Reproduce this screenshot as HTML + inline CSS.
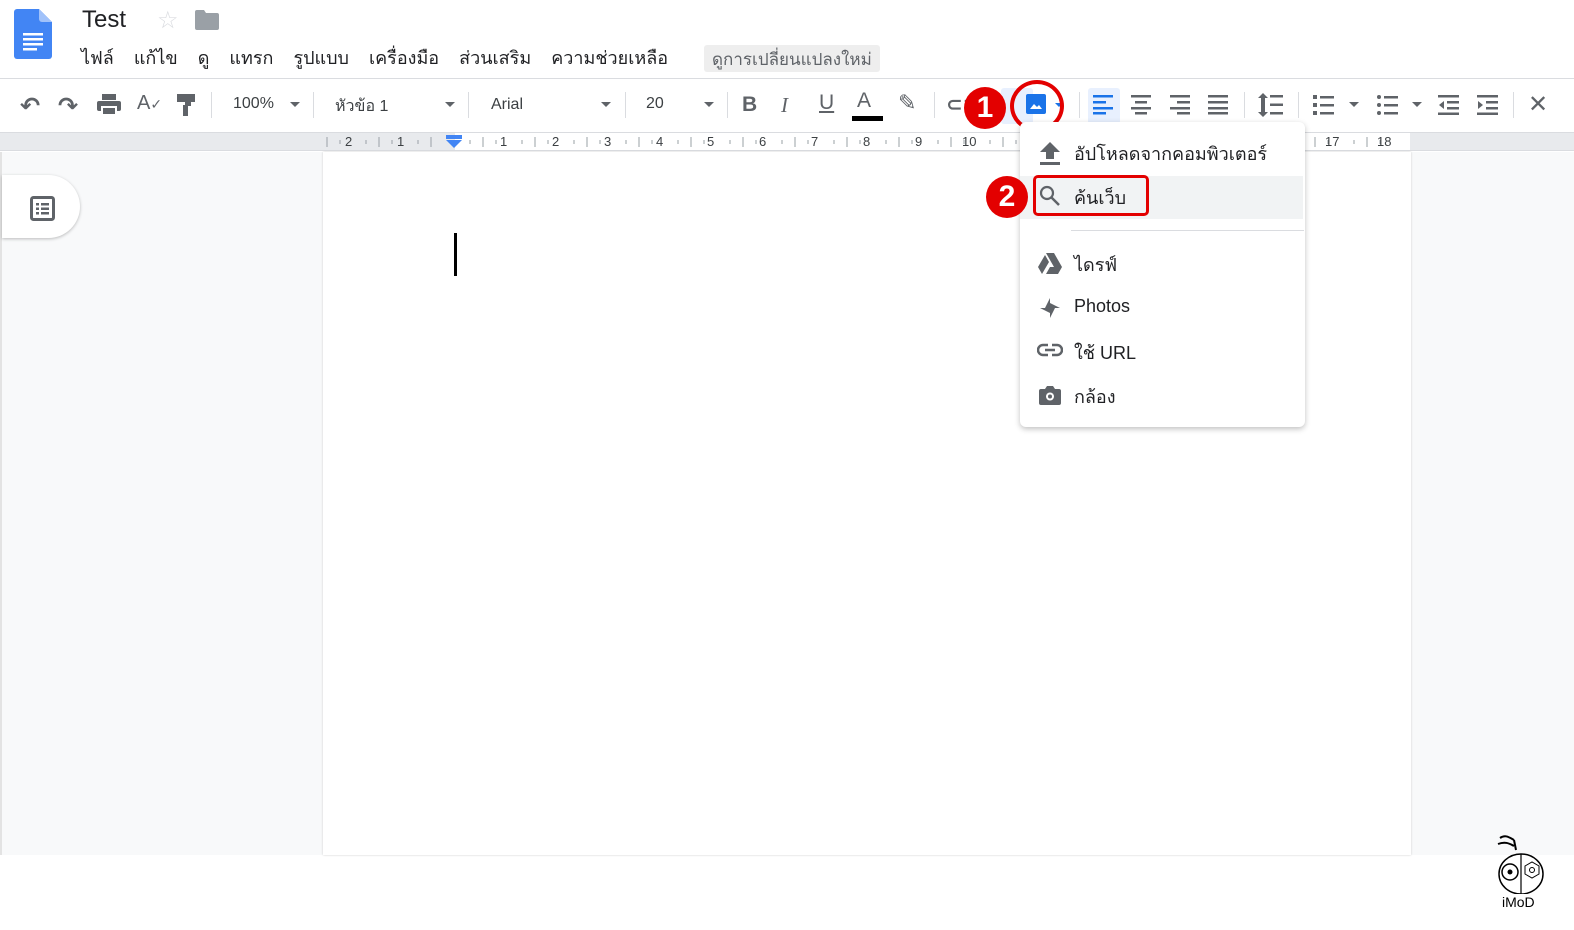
<!DOCTYPE html>
<html><head><meta charset="utf-8"><style>
*{margin:0;padding:0;box-sizing:border-box}
body{width:1574px;height:930px;position:relative;background:#fff;font-family:"Liberation Sans","DejaVu Sans",sans-serif;overflow:hidden;color:#202124}
.a{position:absolute}
.menu span{margin-right:20px}
.tb{color:#5f6368;font-size:16px}
.sep{position:absolute;top:92px;width:1px;height:26px;background:#dadce0}
.dd{position:absolute;width:0;height:0;border-left:5px solid transparent;border-right:5px solid transparent;border-top:5px solid #5f6368}
.ri{position:absolute;top:134px;font-size:13px;color:#3c4043}
.mi{position:absolute;left:1074px;font-size:18px;color:#202124}
.badge{position:absolute;width:42px;height:42px;border-radius:50%;background:#e30000;color:#fff;font-weight:bold;font-size:30px;text-align:center;line-height:42px;font-family:"Liberation Sans",sans-serif}
</style></head><body>
<svg class="a" style="left:14px;top:9px" width="38" height="50" viewBox="0 0 38 50"><path d="M3 0h22l13 13v34a3 3 0 0 1-3 3H3a3 3 0 0 1-3-3V3a3 3 0 0 1 3-3z" fill="#4285f4"/><path d="M25 0l13 13H28a3 3 0 0 1-3-3z" fill="#a1c2fa"/><rect x="9" y="24" width="20" height="2.5" fill="#fff"/><rect x="9" y="29" width="20" height="2.5" fill="#fff"/><rect x="9" y="34" width="20" height="2.5" fill="#fff"/><rect x="9" y="39" width="14" height="2.5" fill="#fff"/></svg>
<div class="a" style="left:82px;top:6px;font-size:24px;color:#202124">Test</div>
<div class="a" style="left:157px;top:6px;font-size:24px;color:#dadce0">☆</div>
<svg class="a" style="left:195px;top:10px" width="24" height="20" viewBox="0 0 24 20"><path d="M0 2a2 2 0 0 1 2-2h7l2 3h11a2 2 0 0 1 2 2v13a2 2 0 0 1-2 2H2a2 2 0 0 1-2-2z" fill="#9aa0a6"/></svg>
<div class="a menu" style="left:81px;top:43px;font-size:18px;white-space:nowrap"><span>ไฟล์</span><span>แก้ไข</span><span>ดู</span><span>แทรก</span><span>รูปแบบ</span><span>เครื่องมือ</span><span>ส่วนเสริม</span><span>ความช่วยเหลือ</span></div>
<div class="a" style="left:704px;top:45px;height:27px;width:176px;background:#eeeeee;border-radius:3px;font-size:17px;color:#5f6368;padding:1px 8px;white-space:nowrap">ดูการเปลี่ยนแปลงใหม่</div>
<div class="a" style="left:0;top:78px;width:1574px;height:1px;background:#dadce0"></div>
<div class="a tb" style="left:20px;top:92px;font-size:24px;font-weight:bold">↶</div>
<div class="a tb" style="left:58px;top:92px;font-size:24px;font-weight:bold">↷</div>
<svg class="a" style="left:97px;top:94px" width="24" height="22" viewBox="0 0 24 22"><rect x="5" y="0" width="14" height="6" fill="#5f6368"/><rect x="0" y="7" width="24" height="10" rx="2" fill="#5f6368"/><rect x="5" y="13" width="14" height="8" fill="#5f6368" stroke="#fff" stroke-width="2"/></svg>
<div class="a tb" style="left:137px;top:92px;font-size:20px">A<span style="font-size:14px">✓</span></div>
<svg class="a" style="left:177px;top:94px" width="20" height="22" viewBox="0 0 20 22"><rect x="0" y="0" width="18" height="8" fill="#5f6368"/><rect x="8" y="8" width="6" height="4" fill="#5f6368"/><rect x="6" y="11" width="5" height="11" fill="#5f6368"/></svg>
<div class="sep" style="left:211px"></div>
<div class="a" style="left:233px;top:95px;font-size:16px;color:#3c4043">100%</div><div class="dd" style="left:290px;top:102px"></div>
<div class="sep" style="left:313px"></div>
<div class="a" style="left:335px;top:94px;font-size:16px;color:#3c4043">หัวข้อ 1</div><div class="dd" style="left:445px;top:102px"></div>
<div class="sep" style="left:468px"></div>
<div class="a" style="left:491px;top:96px;font-size:16px;color:#3c4043">Arial</div><div class="dd" style="left:601px;top:102px"></div>
<div class="sep" style="left:625px"></div>
<div class="a" style="left:646px;top:95px;font-size:16px;color:#3c4043">20</div><div class="dd" style="left:704px;top:102px"></div>
<div class="sep" style="left:727px"></div>
<div class="a tb" style="left:742px;top:93px;font-size:21px;font-weight:bold">B</div>
<div class="a tb" style="left:781px;top:93px;font-size:21px;font-style:italic;font-family:'Liberation Serif',serif">I</div>
<div class="a tb" style="left:819px;top:91px;font-size:21px;text-decoration:underline">U</div>
<div class="a tb" style="left:857px;top:89px;font-size:21px">A</div>
<div class="a" style="left:852px;top:116px;width:31px;height:5px;background:#000"></div>
<div class="a tb" style="left:898px;top:90px;font-size:22px">✎</div>
<div class="sep" style="left:934px"></div>
<div class="a tb" style="left:946px;top:92px;font-size:20px;font-weight:bold">⊂⊃</div>
<div class="a" style="left:1001px;top:88px;width:32px;height:36px;background:#e8f0fe;border-radius:3px"></div>
<svg class="a" style="left:1026px;top:94px" width="20" height="20" viewBox="0 0 20 20"><rect width="20" height="20" rx="2" fill="#1a73e8"/><path d="M4 15l4-5 3 3 2-2 3 4z" fill="#fff"/></svg>
<div class="a" style="left:1055px;top:103px;width:0;height:0;border-left:4px solid transparent;border-right:4px solid transparent;border-top:4px solid #1a73e8"></div>
<div class="a" style="left:1010px;top:80px;width:54px;height:52px;border:4px solid #e30000;border-radius:50%"></div>
<div class="badge" style="left:964px;top:87px">1</div>
<div class="sep" style="left:1079px"></div>
<div class="a" style="left:1088px;top:88px;width:32px;height:36px;background:#e8f0fe;border-radius:3px"></div>
<svg class="a" style="left:1093px;top:95px" width="140" height="20" viewBox="0 0 140 20"><g fill="#1a73e8"><rect x="0" y="0" width="20" height="2.5"/><rect x="0" y="6" width="13" height="2.5"/><rect x="0" y="12" width="20" height="2.5"/><rect x="0" y="17" width="13" height="2.5"/></g><g fill="#5f6368"><rect x="38" y="0" width="20" height="2.5"/><rect x="42" y="6" width="12" height="2.5"/><rect x="38" y="12" width="20" height="2.5"/><rect x="42" y="17" width="12" height="2.5"/><rect x="77" y="0" width="20" height="2.5"/><rect x="84" y="6" width="13" height="2.5"/><rect x="77" y="12" width="20" height="2.5"/><rect x="84" y="17" width="13" height="2.5"/><rect x="115" y="0" width="20" height="2.5"/><rect x="115" y="6" width="20" height="2.5"/><rect x="115" y="12" width="20" height="2.5"/><rect x="115" y="17" width="20" height="2.5"/></g></svg>
<div class="sep" style="left:1244px"></div>
<svg class="a" style="left:1258px;top:93px" width="26" height="24" viewBox="0 0 26 24"><g fill="#5f6368"><path d="M5 0l5 5H7v14h3l-5 5-5-5h3V5H0z"/><rect x="12" y="2" width="13" height="2.5"/><rect x="12" y="10.5" width="13" height="2.5"/><rect x="12" y="19" width="13" height="2.5"/></g></svg>
<div class="sep" style="left:1298px"></div>
<svg class="a" style="left:1313px;top:95px" width="22" height="20" viewBox="0 0 22 20"><g fill="#5f6368"><rect x="0" y="0" width="4" height="4"/><rect x="0" y="8" width="4" height="4"/><rect x="0" y="16" width="4" height="4"/><rect x="7" y="1" width="14" height="2.5"/><rect x="7" y="9" width="14" height="2.5"/><rect x="7" y="17" width="14" height="2.5"/></g></svg><div class="dd" style="left:1349px;top:102px"></div>
<svg class="a" style="left:1377px;top:95px" width="22" height="20" viewBox="0 0 22 20"><g fill="#5f6368"><circle cx="2" cy="2" r="2"/><circle cx="2" cy="10" r="2"/><circle cx="2" cy="18" r="2"/><rect x="7" y="1" width="14" height="2.5"/><rect x="7" y="9" width="14" height="2.5"/><rect x="7" y="17" width="14" height="2.5"/></g></svg><div class="dd" style="left:1412px;top:102px"></div>
<svg class="a" style="left:1438px;top:95px" width="22" height="20" viewBox="0 0 22 20"><g fill="#5f6368"><rect x="0" y="0" width="21" height="2.5"/><rect x="9" y="6" width="12" height="2.5"/><rect x="9" y="12" width="12" height="2.5"/><rect x="0" y="17.5" width="21" height="2.5"/><path d="M6 6v8l-5-4z"/></g></svg>
<svg class="a" style="left:1477px;top:95px" width="22" height="20" viewBox="0 0 22 20"><g fill="#5f6368"><rect x="0" y="0" width="21" height="2.5"/><rect x="9" y="6" width="12" height="2.5"/><rect x="9" y="12" width="12" height="2.5"/><rect x="0" y="17.5" width="21" height="2.5"/><path d="M1 6v8l5-4z"/></g></svg>
<div class="sep" style="left:1513px"></div>
<div class="a tb" style="left:1528px;top:90px;font-size:24px">✕</div>
<div class="a" style="left:0;top:132px;width:1574px;height:19px;background:#e8eaed;border-top:1px solid #dadce0;border-bottom:1px solid #dadce0"></div>
<div class="a" style="left:455px;top:132px;width:955px;height:19px;background:#fff;border-top:1px solid #dadce0;border-bottom:1px solid #dadce0"></div>
<svg class="a" style="left:320px;top:134px" width="1100" height="15"><g stroke="#9aa0a6" stroke-width="1">
<path d="M7 3v10M59 3v10M111 3v10M163 3v10M215 3v10M267 3v10M319 3v10M371 3v10M423 3v10M475 3v10M527 3v10M579 3v10M631 3v10M683 3v10M735 3v10M995 3v10M1047 3v10"/>
<path d="M20 6v4M46 6v4M72 6v4M98 6v4M150 6v4M176 6v4M202 6v4M228 6v4M254 6v4M280 6v4M306 6v4M332 6v4M358 6v4M384 6v4M410 6v4M436 6v4M462 6v4M488 6v4M514 6v4M540 6v4M566 6v4M592 6v4M618 6v4M644 6v4M670 6v4M696 6v4M982 6v4M1008 6v4M1034 6v4M1060 6v4"/></g></svg>
<div class="ri" style="left:345px">2</div><div class="ri" style="left:397px">1</div>
<div class="ri" style="left:500px">1</div><div class="ri" style="left:552px">2</div><div class="ri" style="left:604px">3</div><div class="ri" style="left:656px">4</div><div class="ri" style="left:707px">5</div><div class="ri" style="left:759px">6</div><div class="ri" style="left:811px">7</div><div class="ri" style="left:863px">8</div><div class="ri" style="left:915px">9</div><div class="ri" style="left:962px">10</div><div class="ri" style="left:1325px">17</div><div class="ri" style="left:1377px">18</div>
<div class="a" style="left:446px;top:135px;width:16px;height:4px;background:#4285f4"></div>
<div class="a" style="left:446px;top:140px;width:0;height:0;border-left:8px solid transparent;border-right:8px solid transparent;border-top:8px solid #4285f4"></div>
<div class="a" style="left:0;top:152px;width:1574px;height:703px;background:#f8f9fa"></div>
<div class="a" style="left:0;top:152px;width:2px;height:703px;background:#e3e3e3"></div>
<div class="a" style="left:323px;top:152px;width:1088px;height:703px;background:#fff;box-shadow:0 0 2px #ccc"></div>
<div class="a" style="left:454px;top:233px;width:3px;height:43px;background:#000"></div>
<div class="a" style="left:2px;top:175px;width:78px;height:63px;background:#fff;border-radius:0 32px 32px 0;box-shadow:0 1px 3px rgba(0,0,0,.25)"></div>
<svg class="a" style="left:30px;top:196px" width="25" height="25" viewBox="0 0 25 25"><rect x="1.5" y="1.5" width="22" height="22" rx="2" fill="none" stroke="#5f6368" stroke-width="3"/><g fill="#5f6368"><rect x="6" y="7" width="3" height="2.5"/><rect x="11" y="7" width="8" height="2.5"/><rect x="6" y="11.5" width="3" height="2.5"/><rect x="11" y="11.5" width="8" height="2.5"/><rect x="6" y="16" width="3" height="2.5"/><rect x="11" y="16" width="8" height="2.5"/></g></svg>
<div class="a" style="left:1020px;top:122px;width:285px;height:305px;background:#fff;border-radius:6px;box-shadow:0 2px 6px rgba(0,0,0,.25)"></div>
<div class="a" style="left:1020px;top:176px;width:283px;height:43px;background:#f1f3f4"></div>
<div class="a" style="left:1071px;top:230px;width:233px;height:1px;background:#dadce0"></div>
<svg class="a" style="left:1039px;top:142px" width="22" height="24" viewBox="0 0 22 24"><path d="M11 0L1 10h6v7h8v-7h6z" fill="#5f6368"/><rect x="1" y="20" width="20" height="3" fill="#5f6368"/></svg>
<div class="mi" style="top:139px">อัปโหลดจากคอมพิวเตอร์</div>
<svg class="a" style="left:1039px;top:185px" width="22" height="22" viewBox="0 0 22 22"><circle cx="8" cy="8" r="6" fill="none" stroke="#5f6368" stroke-width="2.2"/><path d="M12.5 12.5L20 20" stroke="#5f6368" stroke-width="2.5"/></svg>
<div class="mi" style="top:183px">ค้นเว็บ</div>
<div class="a" style="left:1033px;top:175px;width:116px;height:41px;border:3.5px solid #e30000;border-radius:5px"></div>
<div class="badge" style="left:986px;top:176px">2</div>
<svg class="a" style="left:1038px;top:253px" width="24" height="22" viewBox="0 0 24 22"><path d="M8 0h8l8 14h-8z M7 2l4 7-7 12-4-7z M8 21l4-7h12l-4 7z" fill="#5f6368"/></svg>
<div class="mi" style="top:250px">ไดรฟ์</div>
<svg class="a" style="left:1038px;top:296px" width="24" height="24" viewBox="0 0 24 24"><g fill="#5f6368"><path d="M12 2v10H7z"/><path d="M22 12H12V7z"/><path d="M12 22V12h5z"/><path d="M2 12h10v5z"/></g></svg>
<div class="mi" style="top:296px">Photos</div>
<svg class="a" style="left:1037px;top:343px" width="26" height="14" viewBox="0 0 26 14"><path d="M11 2H6a5 5 0 0 0 0 10h5M15 2h5a5 5 0 0 1 0 10h-5M8 7h10" fill="none" stroke="#5f6368" stroke-width="2.5"/></svg>
<div class="mi" style="top:338px">ใช้ URL</div>
<svg class="a" style="left:1039px;top:385px" width="22" height="20" viewBox="0 0 22 20"><path d="M2 4h4l2-3h6l2 3h4a2 2 0 0 1 2 2v12a2 2 0 0 1-2 2H2a2 2 0 0 1-2-2V6a2 2 0 0 1 2-2z" fill="#5f6368"/><circle cx="11" cy="11.5" r="4" fill="#fff"/><circle cx="11" cy="11.5" r="2" fill="#5f6368"/></svg>
<div class="mi" style="top:382px">กล้อง</div>
<svg class="a" style="left:1496px;top:832px" width="50" height="62" viewBox="0 0 50 62"><path d="M4 6c6-4 10 0 14 2M2 12c8-3 12 0 16 2M18 8l2 10" fill="none" stroke="#000" stroke-width="2"/><ellipse cx="25" cy="42" rx="22" ry="20" fill="none" stroke="#000" stroke-width="1.5"/><path d="M25 22v40" stroke="#000" stroke-width="1.2"/><circle cx="14" cy="40" r="8" fill="none" stroke="#000" stroke-width="1.5"/><circle cx="14" cy="40" r="2.5" fill="#000"/><path d="M29 34l7-4 7 4v8l-7 4-7-4z" fill="none" stroke="#000"/><circle cx="36" cy="38" r="2.5" fill="none" stroke="#000"/></svg>
<div class="a" style="left:1502px;top:894px;font-size:14px;color:#000">iMoD</div>
</body></html>
